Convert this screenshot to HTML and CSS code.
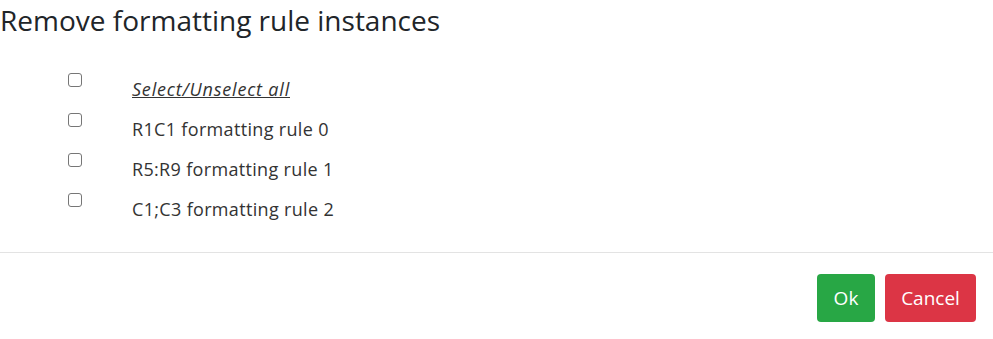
FILE: index.html
```html
<!DOCTYPE html>
<html>
<head>
<meta charset="utf-8">
<link rel="stylesheet" href="styles.css">
</head>
<body>
<div class="dialog">
  <h1 class="title">Remove formatting rule instances</h1>
  <div class="list">
    <div class="row">
      <div class="cb-cell"><span class="cb"></span></div>
      <div class="label"><a class="select-all">Select/Unselect all</a></div>
    </div>
    <div class="row">
      <div class="cb-cell"><span class="cb"></span></div>
      <div class="label">R1C1 formatting rule 0</div>
    </div>
    <div class="row">
      <div class="cb-cell"><span class="cb"></span></div>
      <div class="label">R5:R9 formatting rule 1</div>
    </div>
    <div class="row">
      <div class="cb-cell"><span class="cb"></span></div>
      <div class="label">C1;C3 formatting rule 2</div>
    </div>
  </div>
  <div class="footer">
    <button class="btn btn-ok">Ok</button>
    <button class="btn btn-cancel">Cancel</button>
  </div>
</div>
</body>
</html>
```

FILE: styles.css
```css
html, body {
  margin: 0;
  padding: 0;
  background: #ffffff;
}
body {
  font-family: "Open Sans", "Noto Sans", sans-serif;
  color: #212529;
}
.title {
  margin: 0;
  padding-top: 2px;
  font-size: 28px;
  font-weight: 400;
  line-height: 36px;
  color: #212529;
}
.list {
  padding-top: 31px;
  padding-bottom: 23px;
}
.row {
  display: flex;
  height: 40px;
}
.cb-cell {
  width: 132px;
  padding-left: 68px;
  padding-top: 4px;
  box-sizing: border-box;
}
.cb {
  display: block;
  width: 14px;
  height: 14px;
  box-sizing: border-box;
  border: 1px solid #767676;
  border-radius: 3px;
  background: #fff;
}
.label {
  font-size: 18px;
  line-height: 24px;
  padding-top: 8px;
  color: #333333;
  letter-spacing: 0.33px;
}
.select-all {
  font-style: italic;
  text-decoration: underline;
  color: #333333;
  letter-spacing: 0.8px;
}
.footer {
  border-top: 1px solid #e3e3e3;
  display: flex;
  justify-content: flex-end;
  gap: 10px;
  padding: 21px 17px 0 0;
}
.btn {
  font-family: "Open Sans", "Noto Sans", sans-serif;
  font-size: 19px;
  color: #ffffff;
  border: none;
  border-radius: 4px;
  height: 48px;
  padding: 0;
  cursor: pointer;
}
.btn-ok {
  background: #28a745;
  width: 58px;
}
.btn-cancel {
  background: #dc3545;
  width: 91px;
}
```
